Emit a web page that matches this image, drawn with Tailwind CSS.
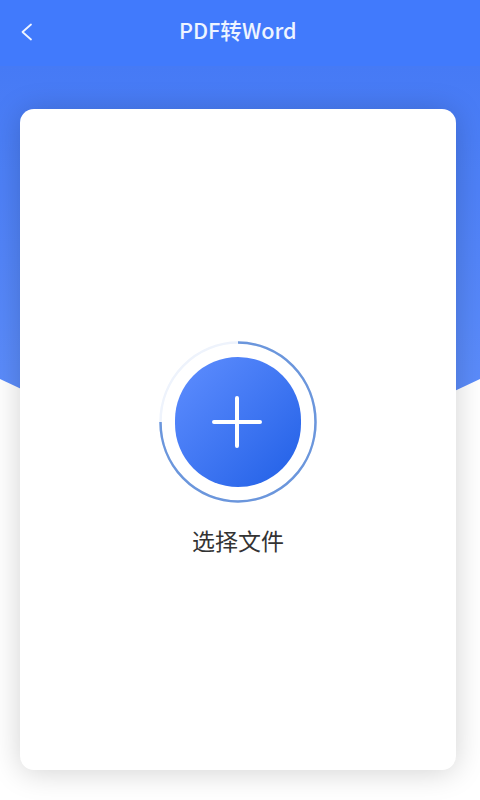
<!DOCTYPE html>
<html lang="zh-CN">
<head>
    <meta charset="UTF-8">
    <meta name="viewport" content="width=device-width, initial-scale=1.0">
    <title>PDF转Word</title>
    <script src="https://cdn.jsdelivr.net/npm/@tailwindcss/browser@4"></script>
</head>
<body class="bg-white font-['Noto_Sans_CJK_SC','Noto_Sans',sans-serif]">
    <div class="relative w-[480px] h-[800px] overflow-hidden bg-white">
        <!-- blue backdrop with curved bottom -->
        <svg class="absolute left-0 top-0" width="480" height="500" viewBox="0 0 480 500">
            <defs>
                <linearGradient id="backdrop" x1="0" y1="0" x2="0" y2="1">
                    <stop offset="0" stop-color="#467af5"/>
                    <stop offset="1" stop-color="#5f8ffb"/>
                </linearGradient>
            </defs>
            <path d="M0 66H480V379Q240 499 0 379Z" fill="url(#backdrop)"/>
        </svg>

        <!-- header -->
        <div class="relative flex items-center h-[66px] bg-[#417afc]">
            <svg class="ml-[20px] mt-[-3px]" width="13" height="18" viewBox="0 0 13 18" fill="none">
                <path d="M11 1.5L2.5 9L11 16.5" stroke="#eef4ff" stroke-width="1.8" stroke-linecap="round" stroke-linejoin="round"/>
            </svg>
            <h1 class="absolute left-[179px] top-[13px] text-[21.6px] leading-[34px] font-medium text-[#eef4ff] whitespace-nowrap">PDF转Word</h1>
        </div>

        <!-- card -->
        <div class="relative flex flex-col items-center ml-[20px] mt-[43px] w-[436px] h-[661px] pt-[232px] bg-white rounded-[14px] shadow-[0_2px_30px_rgba(0,0,0,0.18)]">
            <div class="relative flex items-center justify-center w-[160px] h-[162px]">
                <svg class="absolute left-0 top-0" width="160" height="162" viewBox="0 0 160 162" fill="none">
                    <ellipse cx="80" cy="81" rx="77.5" ry="79.5" stroke="#eef3fc" stroke-width="2.5"/>
                    <path d="M80 1.5A77.5 79.5 0 1 1 2.5 81" stroke="#6b96dc" stroke-width="2.5"/>
                </svg>
                <div class="flex items-center justify-center w-[126px] h-[130px] rounded-full bg-gradient-to-br from-[#5f8eff] to-[#1f5fe6]">
                    <svg class="mr-[2px]" width="52" height="52" viewBox="0 0 52 52" fill="none">
                        <path d="M26 2V50M3 26H49" stroke="#ffffff" stroke-width="4" stroke-linecap="round"/>
                    </svg>
                </div>
            </div>
            <p class="mt-[20px] text-[23px] leading-[34px] text-[#333333]">选择文件</p>
        </div>
    </div>
</body>
</html>
